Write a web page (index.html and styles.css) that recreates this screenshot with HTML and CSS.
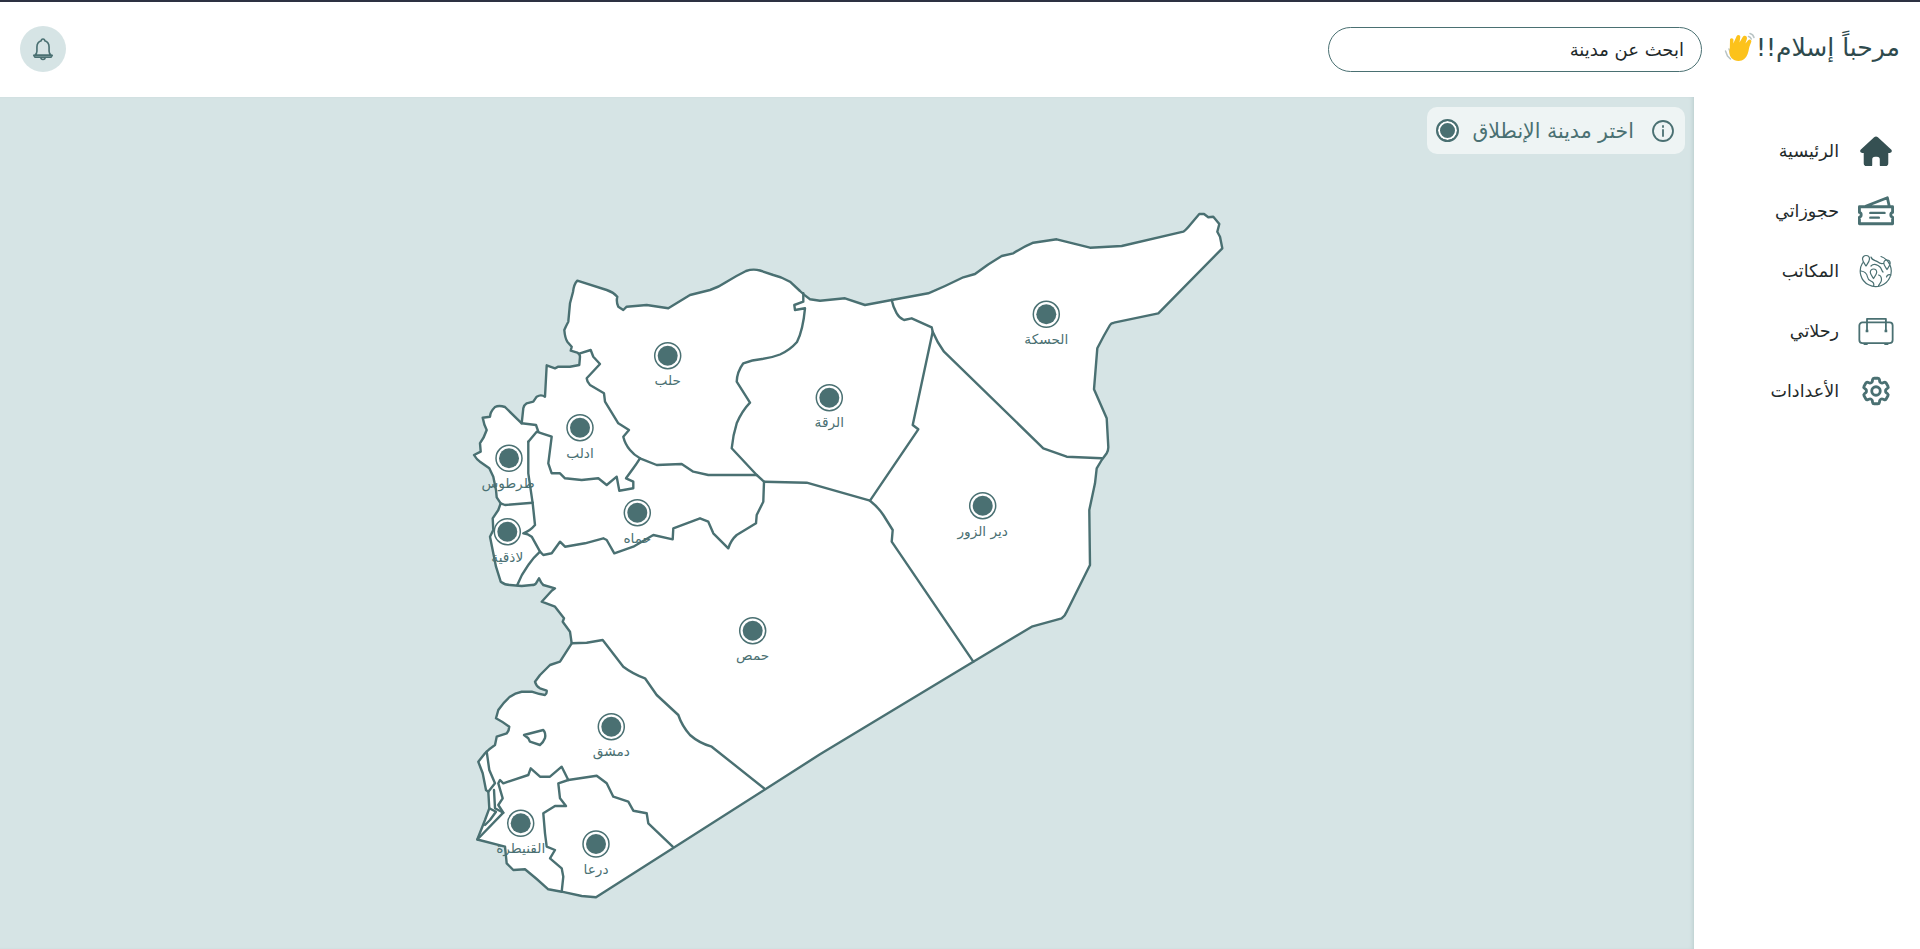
FILE: index.html
```html
<!DOCTYPE html>
<html lang="ar" dir="rtl">
<head>
<meta charset="utf-8">
<title>خريطة الرحلات</title>
<link rel="stylesheet" href="styles.css">
</head>
<body>
<div class="page">
  <header class="topbar">
    <div class="greeting">
      <span class="greeting-text">مرحباً إسلام!!</span>
      <svg class="wave" viewBox="0 0 32 32" aria-hidden="true">
        <path class="wave-lines" d="M1.500 19l2 5 3 3M5 17l1.500 4M26 1.500c2 .5 3.500 2 4 4M24.500 4.500c1.500.3 2.300 1 2.800 2.500"/>
        <path class="wave-hand" d="M22.500 4.500c-1.300-1.200-3-.8-3.800.6l-3.200 5.500.8-5.500c.2-2-2.600-2.900-3.600-1l-3.400 7.500.2-3.600c0-2-2.600-2.600-3.500-.8L5.800 17c-1 3-.5 6.500 1.700 9 3.300 3.600 9.200 4.200 13 .8 2.800-2.500 3.800-6.200 4.500-10.300.5-2.500 1.500-4.600 2.300-6.800.6-1.800-2-3-3.200-1.500l-2.700 3.300 1.500-4.600c.3-1-.2-1.800-.4-2.400z"/>
      </svg>
    </div>
    <div class="search">ابحث عن مدينة</div>
    <div class="spacer"></div>
    <button class="bell" type="button" aria-label="الإشعارات">
      <svg viewBox="0 0 24 24"><path d="M12 2.800a1.600 1.600 0 0 1 1.600 1.600c2.600.8 4 3 4 5.700v3.900c0 1.600.7 2.700 1.900 3.600H4.500c1.200-.9 1.900-2 1.900-3.600v-3.900c0-2.700 1.400-4.900 4-5.700A1.600 1.600 0 0 1 12 2.800zM3.500 17.800h17l-1 1.700h-15zM10 19.700a2 2 0 0 0 4 0"/></svg>
    </button>
  </header>
  <div class="body">
    <nav class="sidebar">
      <a class="nav-item">
        <svg class="nav-icon" viewBox="0 0 36 36"><path class="solid" d="M16 3.500a3 3 0 0 1 4 0l14 13c1.500 1.500.5 3.500-1.500 3.500H31v11a3 3 0 0 1-3 3h-5a1 1 0 0 1-1-1v-6a3 3 0 0 0-3-3h-2a3 3 0 0 0-3 3v6a1 1 0 0 1-1 1H8a3 3 0 0 1-3-3V20H3.500C1.500 20 .5 18 2 16.500z"/></svg>
        <span>الرئيسية</span>
      </a>
      <a class="nav-item">
        <svg class="nav-icon" viewBox="0 0 38 34"><path class="line thick" d="M1.500 12.500h35v6c-2.500.5-2.500 4.500 0 5v7h-35v-7c2.500-.5 2.500-4.500 0-5zM8 12l23-9 2 9"/><path class="line thick-dash" d="M13 19h15M13 24h9"/></svg>
        <span>حجوزاتي</span>
      </a>
      <a class="nav-item">
        <svg class="nav-icon" viewBox="0 0 34 34"><path class="line thin" d="M22 2.500A15.500 15.500 0 1 1 3.500 9M7 1.500a3.500 3.500 0 0 1 3.500 3.500c0 2.500-2 4.800-3.500 7-1.500-2.200-3.500-4.500-3.500-7A3.500 3.500 0 0 1 7 1.500zM28 6a3.200 3.200 0 0 1 3.200 3.200c0 2.300-2 4.300-3.200 6.300-1.200-2-3.200-4-3.200-6.300A3.200 3.200 0 0 1 28 6zM14.500 15a3.200 3.200 0 0 1 3.200 3.200c0 2.300-2 4.300-3.200 6.300-1.200-2-3.200-4-3.200-6.300a3.200 3.200 0 0 1 3.200-3.200zM2 17c4 .5 6 3 6.500 6 .5 3.500 3 3.500 5 5s1 4.500 1 4.500M12 3c1 4 5 3 7 5s5 1.500 5 1.500M12 12c3-3 7-1 9 1s1 3 3 5M19.500 21c3 .5 3 3 3 5s-2 4-3 5.500M32 21c-2-1-4 0-4.500 2"/></svg>
        <span>المكاتب</span>
      </a>
      <a class="nav-item">
        <svg class="nav-icon wide" viewBox="0 0 40 32"><path class="line" d="M5 6.500h30a3.500 3.500 0 0 1 3.500 3.500v16a3.500 3.500 0 0 1-3.500 3.500H5A3.500 3.500 0 0 1 1.500 26V10A3.500 3.500 0 0 1 5 6.500zM10 15V2.500h21V15M7 30.500h3M30 30.500h3"/><path class="solid" d="M8.500 14.500h3v3h-3zM29.500 14.500h3v3h-3z"/></svg>
        <span>رحلاتي</span>
      </a>
      <a class="nav-item">
        <svg class="nav-icon" viewBox="0 0 24 24"><path class="line" d="M9.594 3.940c.09-.542.56-.94 1.110-.94h2.593c.55 0 1.020.398 1.110.94l.213 1.281c.063.374.313.686.645.870.074.040.147.083.22.127.325.196.72.257 1.075.124l1.217-.456a1.125 1.125 0 0 1 1.370.49l1.296 2.247a1.125 1.125 0 0 1-.26 1.431l-1.003.827c-.293.241-.438.613-.43.992a7.723 7.723 0 0 1 0 .255c-.008.378.137.75.43.991l1.004.827c.424.35.534.955.26 1.430l-1.298 2.247a1.125 1.125 0 0 1-1.369.491l-1.217-.456c-.355-.133-.75-.072-1.076.124a6.470 6.470 0 0 1-.22.128c-.331.183-.581.495-.644.869l-.213 1.281c-.09.543-.56.94-1.110.94h-2.594c-.55 0-1.019-.398-1.110-.94l-.213-1.281c-.062-.374-.312-.686-.644-.87a6.520 6.520 0 0 1-.22-.127c-.325-.196-.72-.257-1.076-.124l-1.217.456a1.125 1.125 0 0 1-1.369-.49l-1.297-2.247a1.125 1.125 0 0 1 .26-1.431l1.004-.827c.292-.24.437-.613.43-.991a6.932 6.932 0 0 1 0-.255c.007-.38-.138-.751-.43-.992l-1.004-.827a1.125 1.125 0 0 1-.26-1.430l1.297-2.247a1.125 1.125 0 0 1 1.370-.491l1.216.456c.356.133.751.072 1.076-.124.072-.044.146-.086.22-.128.332-.183.582-.495.644-.869l.214-1.280zM15 12a3 3 0 1 1-6 0 3 3 0 0 1 6 0z"/></svg>
        <span>الأعدادات</span>
      </a>
    </nav>
    <main class="map-area">
      <div class="hint">
        <svg class="hint-info" viewBox="0 0 24 24"><circle cx="12" cy="12" r="10"/><path d="M12 11v6M12 7v1"/></svg>
        <span class="hint-text">اختر مدينة الإنطلاق</span>
        <span class="hint-dot"></span>
      </div>
      <svg class="map" viewBox="0 97 1694 852" aria-label="خريطة سوريا">
        <path class="land" d="M577.300 280.700Q574 284 573 292L570 303.300L568.300 321.700Q566 326 564.300 330Q565 338 567.300 341.700L571.700 346.700L570.700 350.700L577.300 352.700Q580 354 580 356.700L579.300 365L570 366.700L558.300 366.700L555 368.300L546.700 365.300L545 396.700Q541 394 536.700 396.700L533.300 401.700L526.700 403.300Q524 405 523.300 408.300L521.700 423.300Q512 414 505 407Q499 405 495 407Q490 412 490 416.700L482.700 417.700Q484 425 486.700 430Q484 438 480 443.300L480.700 451.700L474 455Q477 460 480 461.700L489.300 468.300L493.300 476.700L496 490L496.700 497.300L500.700 503.300L498.300 510L492.700 518.300L493.300 530L490 536.700L493.300 553.300L496 566.700L500.700 581.700Q505 585 510 585L521.700 586L531.700 585Q535 585 536 583.300L539 578.300Q541 583 543.300 585L555 588.300L551.700 590.700L541.700 601.700L555 606.700L564 618.300L562.700 621.700L570 631.700L571.700 643.300L560 661.700L550 665L540 675L535 681.700Q536 686 540 688.300L546.700 690.700Q547 694 545 695Q538 694 531.700 691.700L521.700 691.700Q515 693 510 696.700Q503 703 498.300 710L496 718.300Q503 722 509.300 726.700Q509 731 506.700 733.300L496.700 736.700L495 745Q489 749 485 753.300L478.300 761.700L482.700 773.300L486 790L488.300 791.700L489.300 808.300L485 820L477.300 839.500L505 846.700L506.700 863.300L513.300 870L525 869.300Q537 879 548.300 889.300L561.700 891.700L581.700 896L596 897.300L820 754.300L973.300 661.700L1031.700 626.700L1061.700 618.300Q1065 616 1066.700 611.700L1090 565L1089.300 510L1095 483.300L1096.700 468.300L1101.700 460L1106.700 453.300Q1108.500 450 1108.300 446.700L1106.700 418.300L1094 389.300L1097.300 348.300Q1104 335 1110 325Q1111 323 1114 322.700L1158.300 313.300L1222.300 248.300L1220 236.700L1217.300 231.700L1219.300 224L1213.300 216.700L1208.300 217.300L1204 214L1199.300 214L1190 225Q1186 230 1183.300 231.700L1121.700 246L1090 247.700L1056.700 239.300L1033.300 242.700Q1023 247 1013.300 253.300L1001.700 256Q988 264 975 274L963.300 277.300Q946 286 928.300 293.300L891.700 300L865 305L845 298.300L820 300.700L810 299.300Q804 295 800 291L790 281.700Q782 277 773.300 275L760 270.500Q753 268.500 746 271Q736 276 726.700 281.700Q719 287 710 290L690 295L668.300 308.300L646.700 305L626.700 306.700L623.300 310L618.300 306.700Q616 302 617.300 296.700Q613 292 606.700 290Z"/>
        <path class="border" d="M580 353.300L590.700 350L593.300 356.700L600 364L586.700 378.300Q587 382 590 385L604 393.300L605 401.700L618.300 423.300L629 430L623.300 436.700Q625 444 630 450Q634 455 640 458.300Q637 463 633.300 468.300L626 478.300L633.300 481.700L633.300 488.300L619.300 490.700L616.700 476.700L606.700 485L598.300 478.300L581.700 480L565 478.300L560 473.300L551.700 473.300L548.300 463.300L551.700 436.700L541.700 433.300L536.700 431.700L528.300 441.700"/>
        <path class="border" d="M521.700 423.300L536 425L538.300 431.700"/>
        <path class="border" d="M528.300 441.700L528.300 473.300L532.700 503.300L535 525Q530 531 523.300 533.300Q528 534 531.700 536.700L540 551.700Q533 558 528.300 565Q521 575 517.300 585"/>
        <path class="border" d="M500.700 503.300L505 505L532.700 502.700"/>
        <path class="border" d="M540 551.700L543.300 555L551.700 553.300L560 541.700L565 546.700L585 543.300L603.300 538.300L606.700 540L614.300 553.300L633.300 546.700L653.300 535L672.700 539.300L673.300 528.300L700 518.300L708.300 521.700L713.300 533.300L728.300 548.300Q731 540 736.700 535L756 523.300L756.700 515L763.300 501.700L764 481.700L756.700 475L731.700 448.300Q733 435 736.700 423.300Q742 411 750 402.700L736.700 381.700Q737 372 743.300 363.300Q752 360 762 359Q771 358 780 354.500Q790 350 797 342Q803 330 805 308.300L795 310L794.300 305L803.300 301.700L803.300 293.300"/>
        <path class="border" d="M640 458.300L656.700 465L681.700 464L693.300 471.700L708.300 475L756.700 475"/>
        <path class="border" d="M764 481.700L806.700 482.700L870 500.700Q878 507 883.300 515L892.700 530L891.700 541.700L973.300 661.700"/>
        <path class="border" d="M870 500.700L918.300 429.300L912.700 425L932.700 331.700"/>
        <path class="border" d="M891.700 300Q893 307 896.700 313.300Q899 318 904 320L911.700 318.300L931.700 327.300L932.700 331.700Q937 342 944 351.700L1043.300 448.300L1066.700 456.700L1101.700 458.300"/>
        <path class="border" d="M571.700 643.300L586.700 642.700L602.700 640L623.300 666.700Q633 674 645 678.300L656.700 695L678.300 715Q682 726 690 735Q699 743 711.700 746.700L764 788.300"/>
        <path class="border" d="M672.700 846.700L648.300 823.300L646.700 813.300L633.300 810.700L628.300 801.700L613.300 796.700L606.700 783.300L596.700 775.700L568.300 780L558.300 783.300L560 798.300L566 806L555 806L543.300 813.300L545 833.300L546.700 846.700L555 850L550 858.300L561.700 868.300L563.300 876.700L561.700 891.700"/>
        <path class="border" d="M568.300 780L561.700 766.700L550 776.700L540 776.700L530.700 768.300L528.300 775L503.300 783.300L500 780L498.300 783.300L502.700 798.300L498.300 805L503.300 812.700L477.300 839.500"/>
        <path class="border" d="M486.700 751.700L489.300 770L495 783.300L488.300 791.700"/>
        <path class="border" d="M494 790L495 808.300L503.300 812.700"/>
        <path class="border" d="M489.300 808.300L496 811.700L490 820L485 825"/>
        <path class="lake" d="M524 735L543.300 730Q546 733 545 738Q543 743 540 745L530 741.700L528.300 738.300Z"/>
        <g class="pin"><circle class="pin-ring" cx="667.700" cy="355.700" r="13"/><circle class="pin-core" cx="667.700" cy="355.700" r="10"/><text x="667.700" y="385">حلب</text></g>
        <g class="pin"><circle class="pin-ring" cx="580" cy="427.700" r="13"/><circle class="pin-core" cx="580" cy="427.700" r="10"/><text x="580" y="458">ادلب</text></g>
        <g class="pin"><circle class="pin-ring" cx="509" cy="458.300" r="13"/><circle class="pin-core" cx="509" cy="458.300" r="10"/><text x="508" y="488">طرطوس</text></g>
        <g class="pin"><circle class="pin-ring" cx="507.300" cy="531.700" r="13"/><circle class="pin-core" cx="507.300" cy="531.700" r="10"/><text x="507.300" y="562">لاذقية</text></g>
        <g class="pin"><circle class="pin-ring" cx="637.300" cy="512.700" r="13"/><circle class="pin-core" cx="637.300" cy="512.700" r="10"/><text x="637.300" y="543">حماه</text></g>
        <g class="pin"><circle class="pin-ring" cx="829.300" cy="397.700" r="13"/><circle class="pin-core" cx="829.300" cy="397.700" r="10"/><text x="829.300" y="427">الرقة</text></g>
        <g class="pin"><circle class="pin-ring" cx="1046.300" cy="314.300" r="13"/><circle class="pin-core" cx="1046.300" cy="314.300" r="10"/><text x="1046.300" y="343.500">الحسكة</text></g>
        <g class="pin"><circle class="pin-ring" cx="982.700" cy="505.700" r="13"/><circle class="pin-core" cx="982.700" cy="505.700" r="10"/><text x="982.700" y="536">دير الزور</text></g>
        <g class="pin"><circle class="pin-ring" cx="752.700" cy="630.700" r="13"/><circle class="pin-core" cx="752.700" cy="630.700" r="10"/><text x="752.700" y="660">حمص</text></g>
        <g class="pin"><circle class="pin-ring" cx="611.300" cy="726.700" r="13"/><circle class="pin-core" cx="611.300" cy="726.700" r="10"/><text x="611.300" y="756">دمشق</text></g>
        <g class="pin"><circle class="pin-ring" cx="520.700" cy="823.300" r="13"/><circle class="pin-core" cx="520.700" cy="823.300" r="10"/><text x="520.700" y="853">القنيطرة</text></g>
        <g class="pin"><circle class="pin-ring" cx="596" cy="844" r="13"/><circle class="pin-core" cx="596" cy="844" r="10"/><text x="596" y="874">درعا</text></g>
      </svg>
    </main>
  </div>
</div>
</body>
</html>
```
FILE: styles.css
```css
* { box-sizing: border-box; }
html, body { margin: 0; height: 100%; overflow: hidden; }
body { background: #fff; color: #1f2a2b; font-family: "DejaVu Sans", "Noto Sans", sans-serif; }
.page { height: 949px; display: flex; flex-direction: column; border-top: 2px solid #2d3142; }
.topbar { height: 95px; flex: none; display: flex; align-items: center; padding: 0 20px; background: #fff; }
.greeting { display: flex; align-items: center; width: 198px; flex: none; padding-bottom: 4px; }
.greeting-text { font-size: 25px; color: #2e4a4d; white-space: nowrap; }
.wave { width: 32px; height: 32px; flex: none; }
.wave-hand { fill: #fcc21b; }
.wave-lines { fill: none; stroke: #b9c4c5; stroke-width: 1.500; stroke-linecap: round; }
.search { width: 374px; height: 45px; border: 1px solid #4a7072; border-radius: 23px; padding: 0 17px; display: flex; align-items: center; font-size: 18px; color: #1f2a2b; }
.spacer { flex: 1; }
.bell { width: 46px; height: 46px; margin-bottom: 2px; border: 0; padding: 0; border-radius: 50%; background: #d6e4e5; display: flex; align-items: center; justify-content: center; }
.bell svg { width: 26px; height: 26px; fill: none; stroke: #4a7072; stroke-width: 1.500; stroke-linejoin: round; stroke-linecap: round; }
.body { flex: 1; display: flex; min-height: 0; }
.sidebar { width: 226px; flex: none; padding: 24px 26px 0 0; display: flex; flex-direction: column; background: #fff; }
.nav-item { height: 60px; display: flex; align-items: center; gap: 19px; font-size: 17.500px; color: #1f2a2b; }
.nav-icon { width: 36px; height: 34px; flex: none; }
.nav-icon.wide { overflow: visible; }
.solid { fill: #355052; }
.line { fill: none; stroke: #4a7072; stroke-width: 2; stroke-linejoin: round; stroke-linecap: round; }
.nav-item .wide .solid { fill: #4a7072; }
.thick { stroke-width: 3; }
.thick-dash { stroke-width: 2.500; }
.thin { stroke-width: 1.200; }
.map-area { flex: 1; position: relative; background: #d6e4e5; box-shadow: inset -3px 0 4px -2px #b8cccd; min-width: 0; }
.map { display: block; width: 1694px; height: 852px; }
.land { fill: #fff; stroke: #4a7072; stroke-width: 2.400; stroke-linejoin: round; }
.border { fill: none; stroke: #4a7072; stroke-width: 2.400; stroke-linejoin: round; stroke-linecap: round; }
.lake { fill: #fff; stroke: #4a7072; stroke-width: 2.400; stroke-linejoin: round; }
.pin-ring { fill: #fff; stroke: #4a7072; stroke-width: 1.500; }
.pin-core { fill: #4a7072; }
.pin text { font-size: 13.700px; fill: #4a7072; text-anchor: middle; }
.hint { position: absolute; top: 10px; right: 9px; height: 47px; width: 258px; padding: 0 10px 0 11px; border-radius: 10px; background: #eef4f4; display: flex; align-items: center; justify-content: space-between; color: #4a7072; }
.hint-text { font-size: 20.500px; white-space: nowrap; margin: 0 17px 0 13px; }
.hint-info { width: 24px; height: 24px; flex: none; fill: none; stroke: #4a7072; stroke-width: 1.800; stroke-linecap: round; }
.hint-dot { width: 23px; height: 23px; flex: none; border-radius: 50%; border: 2px solid #4a7072; background: #4a7072; box-shadow: inset 0 0 0 2px #fff; }
```
